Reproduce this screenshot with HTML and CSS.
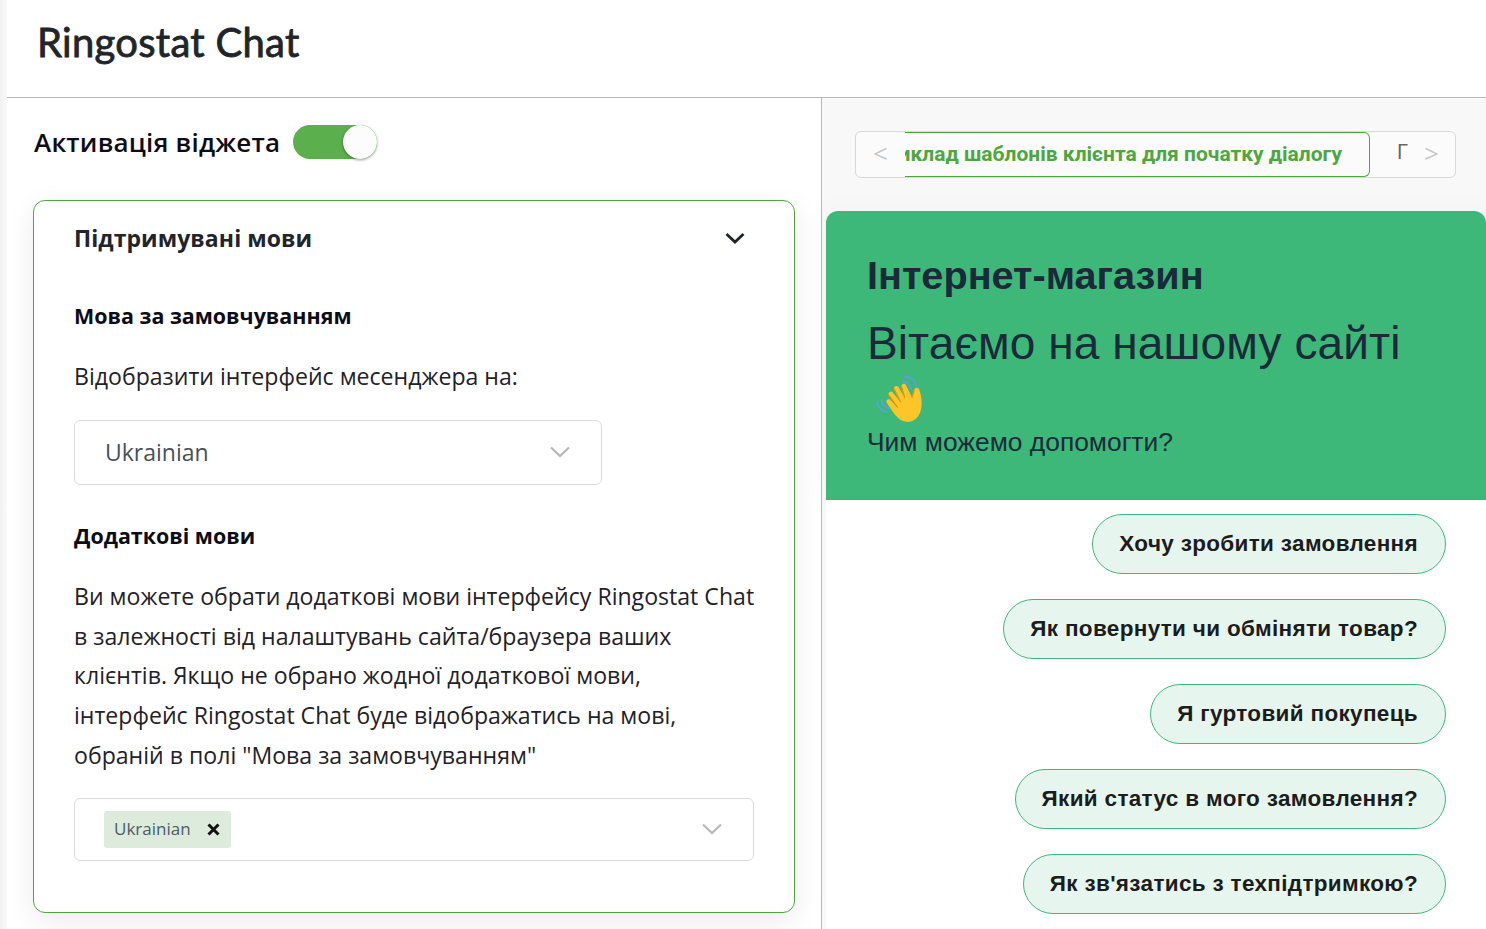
FILE: index.html
```html
<!DOCTYPE html>
<html lang="uk">
<head>
<meta charset="utf-8">
<title>Ringostat Chat</title>
<link rel="stylesheet" href="styles.css">
</head>
<body>
<div class="app">
  <header class="topbar"><h1>Ringostat Chat</h1></header>
  <div class="columns">
    <main class="settings">
      <div class="activation">
        <span class="activation-label">Активація віджета</span>
        <span class="switch"><span class="knob"></span></span>
      </div>
      <section class="panel">
        <div class="panel-head">
          <h2>Підтримувані мови</h2>
          <svg class="panel-chevron" width="22" height="14" viewBox="0 0 22 14"><path d="M2.5 3 L11 11 L19.5 3" fill="none" stroke="#1f2228" stroke-width="2.8"/></svg>
        </div>
        <h3 class="first-heading">Мова за замовчуванням</h3>
        <p class="lead">Відобразити інтерфейс месенджера на:</p>
        <div class="select single">
          <span>Ukrainian</span>
          <svg width="22" height="14" viewBox="0 0 22 14"><path d="M2 2.5 L11 11 L20 2.5" fill="none" stroke="#b5b5b5" stroke-width="2"/></svg>
        </div>
        <h3 class="second-heading">Додаткові мови</h3>
        <p class="body-text">Ви можете обрати додаткові мови інтерфейсу Ringostat Chat<br>в залежності від налаштувань сайта/браузера ваших<br>клієнтів. Якщо не обрано жодної додаткової мови,<br>інтерфейс Ringostat Chat буде відображатись на мові,<br>обраній в полі "Мова за замовчуванням"</p>
        <div class="select multi">
          <span class="tag"><span>Ukrainian</span>
            <svg width="13" height="13" viewBox="0 0 13 13"><path d="M1.500 1.500 L11.500 11.500 M11.500 1.500 L1.500 11.500" stroke="#111" stroke-width="3"/></svg>
          </span>
          <svg width="22" height="14" viewBox="0 0 22 14"><path d="M2 2.5 L11 11 L20 2.5" fill="none" stroke="#b5b5b5" stroke-width="2"/></svg>
        </div>
      </section>
    </main>
    <aside class="preview">
      <div class="tabs">
        <span class="arrow">&lt;</span>
        <div class="tab-window">
          <div class="tab-active"><span class="tab-text">Приклад шаблонів клієнта для початку діалогу</span></div>
          <div class="tab-next"><span>Г</span></div>
        </div>
        <span class="arrow">&gt;</span>
      </div>
      <div class="chat-head">
        <div class="shop">Інтернет-магазин</div>
        <div class="welcome">Вітаємо на нашому сайті</div>
        <svg class="wave" width="55" height="53" viewBox="0 0 52 50">
          <g fill="none" stroke="#5c9fe6" stroke-width="1.6" stroke-linecap="round">
            <path d="M29 4 C35 4 39 8 40 13"/><path d="M27 9 C31 9 34 12 35 16"/>
            <path d="M3 28 C3 33 7 37 12 38"/><path d="M7 26 C7 30 10 33 14 34"/>
          </g>
          <path d="M16 35 L12 29 C11 27 13 25 15 26 L22 33 L14 22 C13 20 15 17 17.500 19 L25 28 L19 16 C18 14 21 12 23 14 L29 24 L26 14 C25.500 12 28 10 30 12 L36 24 L38 17 C39 14 42 14 43 17 C45 24 46 31 44 37 C42 44 36 48 30 47 C24 46 20 41 16 35 Z" fill="#fdc528"/>
          <g fill="none" stroke="#df9610" stroke-width="1.2" stroke-linecap="round">
            <path d="M38 17 L36 24"/><path d="M26 14 L29 24"/><path d="M19 16 L25 28"/><path d="M14 22 L22 33"/>
          </g>
        </svg>
        <div class="help">Чим можемо допомогти?</div>
      </div>
      <div class="chat-actions">
        <button class="action">Хочу зробити замовлення</button>
        <button class="action">Як повернути чи обміняти товар?</button>
        <button class="action">Я гуртовий покупець</button>
        <button class="action">Який статус в мого замовлення?</button>
        <button class="action">Як зв'язатись з техпідтримкою?</button>
      </div>
    </aside>
  </div>
</div>
</body>
</html>
```
FILE: styles.css
```css
* { box-sizing: border-box; }
html, body { margin: 0; height: 100%; overflow: hidden; }
body { background: linear-gradient(90deg, #f1f1f1, #fafafa 7px); font-family: "Open Sans", sans-serif; color: #1f2228; }
.app { margin-left: 7px; height: 929px; background: #fff; display: flex; flex-direction: column; }
.topbar { height: 98px; padding: 17px 0 0 30px; border-bottom: 1px solid #b8b8b8; }
.topbar h1 { margin: 0; font: 400 40px/50px Lato, sans-serif; letter-spacing: .27px; -webkit-text-stroke: .8px #212529; color: #212529; }
.columns { display: flex; flex: 1; min-height: 0; }
.settings { width: 815px; padding: 26px 0 0 26px; border-right: 1px solid #b8b8b8; background: #fff; overflow: hidden; }
.activation { display: flex; align-items: center; gap: 13px; height: 36px; }
.activation-label { margin-left: 1px; font-size: 26px; font-weight: 600; letter-spacing: .2px; color: #0c0c14; }
.switch { position: relative; display: block; width: 84px; height: 34px; border-radius: 17px; background: #5bb04d; }
.knob { position: absolute; right: 0; top: 0; width: 34px; height: 34px; border-radius: 50%; background: #fcfcfc; box-shadow: 0 1px 3px rgba(0,0,0,.4); }
.panel { width: 762px; height: 713px; margin-top: 40px; padding: 0 40px; background: #fff; border: 1px solid #4fa640; border-radius: 12px; box-shadow: 0 8px 30px rgba(0,0,0,.08); }
.panel-head { display: flex; justify-content: space-between; align-items: center; padding: 18px 8px 0 0; height: 56px; }
.panel-head h2 { margin: 0; font-size: 23px; font-weight: 700; letter-spacing: .07px; color: #212529; }
h3 { margin: 0; font-size: 21.45px; font-weight: 700; color: #0c0c14; line-height: 30px; }
.first-heading { margin-top: 44px; }
.lead { margin: 30px 0 0; font-size: 23.1px; line-height: 30px; color: #1f2228; }
.select { display: flex; align-items: center; justify-content: space-between; background: #fff; border: 1px solid #dcdcdc; border-radius: 6px; }
.single { width: 528px; height: 65px; margin-top: 29px; padding: 2px 30px 4px; font-size: 23px; color: #495057; }
.second-heading { margin-top: 36px; }
.body-text { margin: 25.8px 0 0; font-size: 23.1px; line-height: 39.75px; color: #1f2228; white-space: nowrap; }
.multi { width: 680px; height: 63px; margin-top: 22.2px; padding: 0 30px 0 29px; }
.tag { display: flex; align-items: center; justify-content: space-between; width: 127px; height: 37px; padding: 0 11px 1px 10px; background: #dcebdb; border-radius: 3px; font-size: 17px; color: #4f5a6a; }
.tag svg { margin-top: 1px; }
.preview { flex: 1; min-width: 0; display: flex; flex-direction: column; background: #f8f8f8; }
.tabs { display: flex; align-items: center; height: 47px; margin: 33px 30px 0 33px; padding: 0 17px 0 17px; background: #fbfbfb; border: 1px solid #d8d8d8; border-radius: 6px; }
.arrow { width: 14px; padding-bottom: 3px; font: 400 26px/1 "Open Sans", sans-serif; color: #c8c8c8; flex: none; }
.tab-window { flex: 1; min-width: 0; height: 45px; margin: 0 0 0 18px; display: flex; overflow: hidden; }
.tab-active { flex: none; width: 465px; height: 45px; display: flex; align-items: center; justify-content: flex-end; padding-right: 27px; overflow: hidden; border: 1px solid #4fa640; border-left: 0; border-radius: 0 6px 6px 0; }
.tab-text { flex: none; font: 700 21px/1 Roboto, sans-serif; color: #4fa640; white-space: nowrap; }
.tab-next { flex: 1; padding: 7px 0 0 27px; font: 400 20px/26px Roboto, sans-serif; color: #666; }
.chat-head { height: 289px; margin: 33px 0 0 4px; padding: 39px 40px 0 41px; background: #3db879; border-radius: 12px 12px 0 0; font-family: "Liberation Sans", sans-serif; color: #1a2a3a; box-shadow: 0 0 30px rgba(0,0,0,.03); }
.shop { font-size: 39.65px; font-weight: 700; line-height: 50px; }
.welcome { margin-top: 14px; font-size: 46px; line-height: 58px; letter-spacing: .1px; white-space: nowrap; }
.wave { display: block; margin: 0 0 0 7px; }
.help { font-size: 26.4px; line-height: 34px; white-space: nowrap; }
.chat-actions { flex: 1; margin-left: 4px; padding: 13.5px 40px 0 0; display: flex; flex-direction: column; align-items: flex-end; gap: 25px; background: #fff; overflow: hidden; }
.action { flex: none; height: 60px; padding: 1px 27px 0 26px; border: 1px solid #3db879; border-radius: 30px; background: #e6f6ee; font: 700 22.5px/1 "Liberation Sans", sans-serif; letter-spacing: .33px; color: #1c1c1c; }
```
